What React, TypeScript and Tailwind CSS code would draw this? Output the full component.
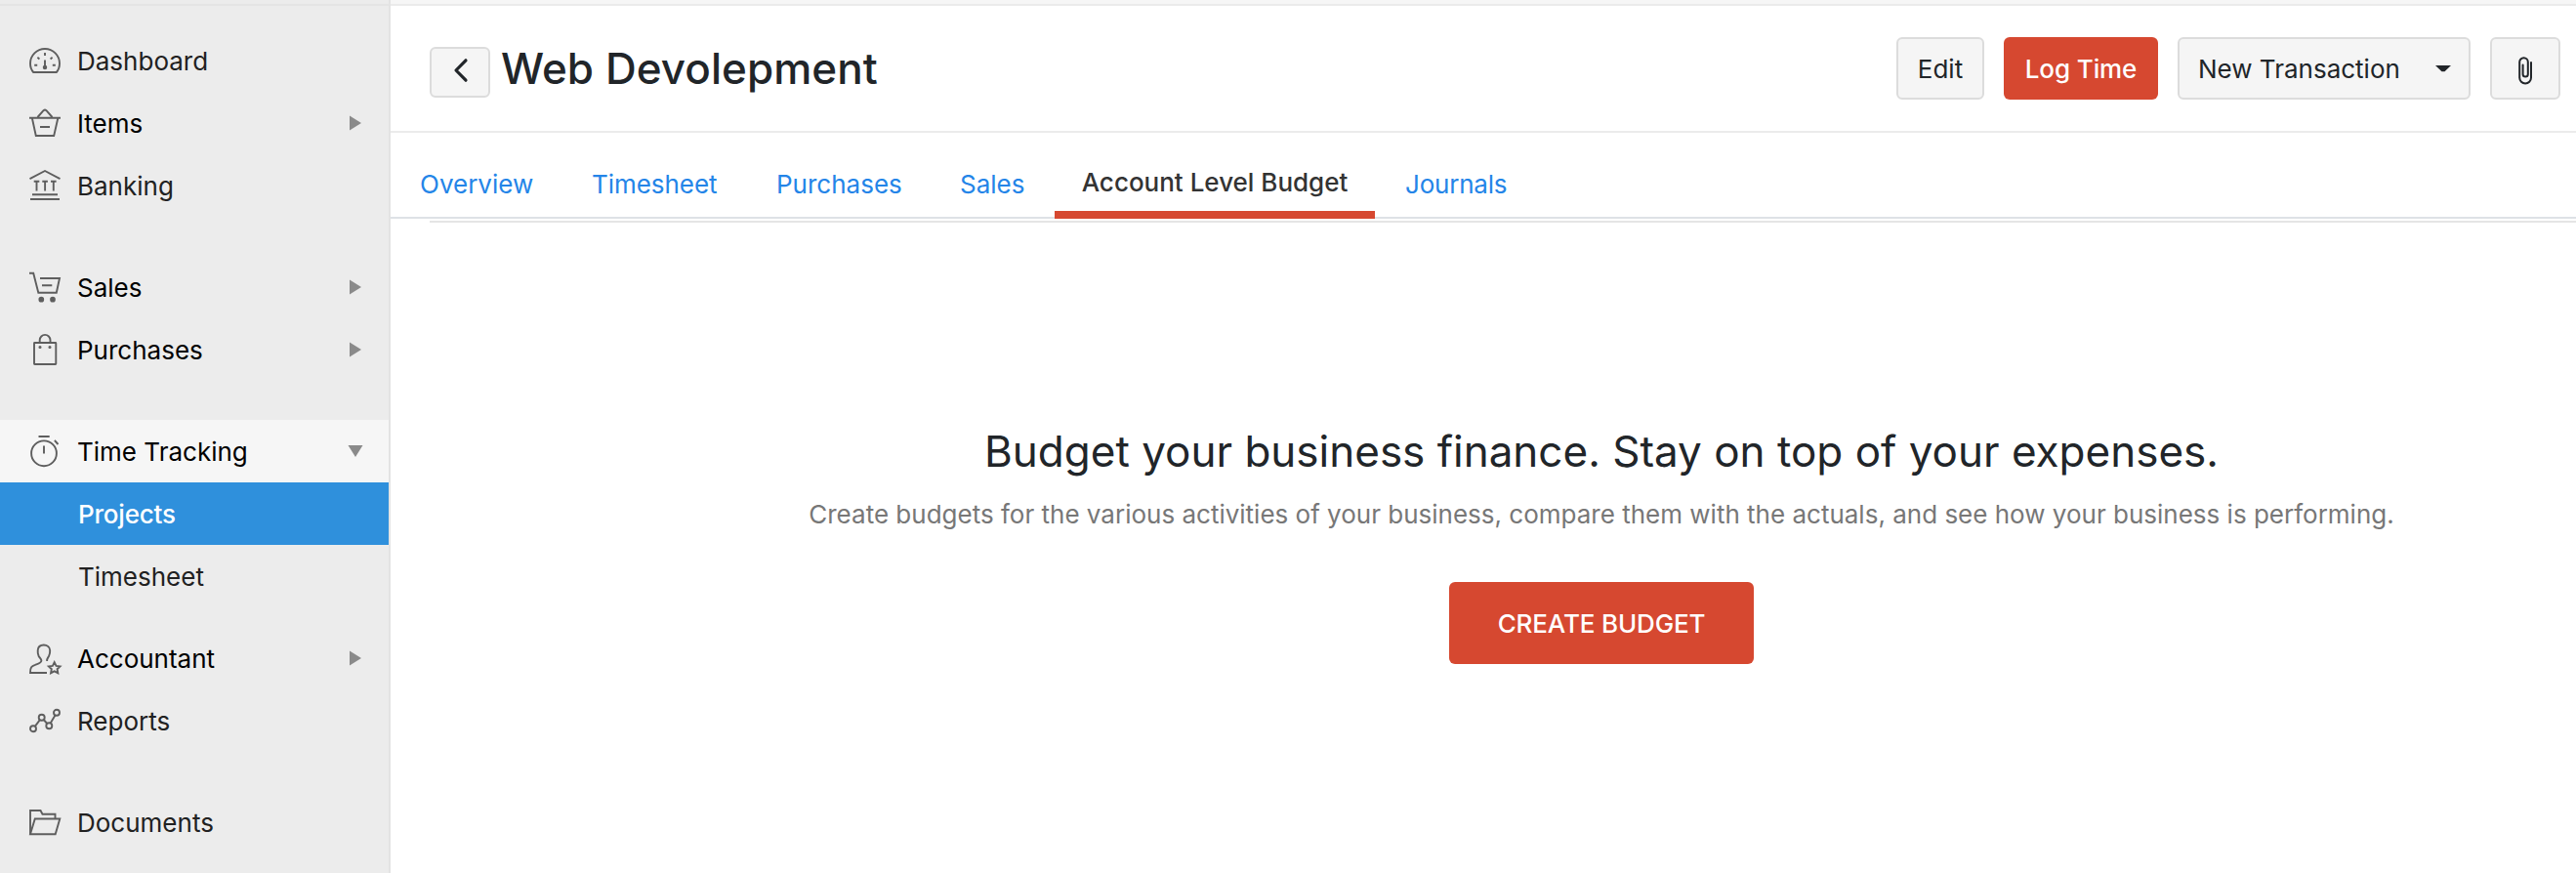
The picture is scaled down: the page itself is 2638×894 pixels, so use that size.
import type { ReactNode } from "react";

type NavItem = {
	label: string;
	icon?: ReactNode;
	arrow?: "right" | "down";
	active?: boolean;
};

const icons = {
	dashboard: (
		<>
			<path d="M4.200 28C2 25.500 1 22.500 1 19a15 15 0 0 1 30 0c0 3.500-1 6.500-3.200 9z" />
			<path d="M16 8v3M8.400 12.800l2 1.600M23.600 12.800l-2 1.600M5.200 20.800h3M23.800 20.800h3M16 15.500v6" />
			<circle cx="16" cy="23" r="1.300" fill="currentColor" />
		</>
	),
	items: (
		<>
			<path d="M8.500 10l6-6.800q1.500-1.200 3 0l6 6.800M0 10.800h32M3 11.500L6.800 29h18.400L29.200 11.500M11 20h10" />
		</>
	),
	banking: (
		<>
			<path d="M.5 9.200L16 1l15.500 8.200M4.700 11.800h5.600M13.300 11.800h5.600M22 11.800h5.600M7.500 12v9.500M16.100 12v9.500M24.800 12v9.500M3 25.300h26M1 30h30" />
		</>
	),
	sales: (
		<>
			<path d="M0 1.800h4.200L9.300 21.800h18.500L31 7H11M13 14.300h10.300" />
			<circle cx="12.300" cy="28.700" r="1.900" fill="currentColor" />
			<circle cx="24" cy="28.700" r="1.900" fill="currentColor" />
		</>
	),
	purchases: (
		<>
			<rect x="5" y="9" width="22.300" height="22" rx=".5" />
			<path d="M10.700 9V6.300a5.400 5.400 0 0 1 10.800 0V9" />
			<circle cx="11" cy="13.500" r=".6" fill="currentColor" />
			<circle cx="21" cy="13.500" r=".6" fill="currentColor" />
		</>
	),
	time: (
		<>
			<circle cx="15" cy="18.300" r="12.900" />
			<path d="M9.500 1h11.200M15 10.500v8M25.900 5l3.600 4" />
		</>
	),
	accountant: (
		<>
			<path d="M18 31H1c-.2-5.500 1.500-7 5-8.200 3.500-1.300 6.400-2 6.400-4.300 0-1.600-1.600-2.500-2.700-4.500C8.800 12 8.500 10 8.700 8c.3-3.600 2.700-5.500 6.100-5.500S21 4.500 21.200 8c.1 2-.2 4-1.200 6-1 1.700-2.200 2.500-1.900 5" />
			<path d="M25.700 20.200l1.800 3.700 4 .5-2.900 2.800.7 4-3.600-1.900-3.600 1.900.7-4-2.900-2.800 4-.5z" />
		</>
	),
	reports: (
		<>
			<circle cx="4" cy="24.300" r="3" />
			<circle cx="12.700" cy="12.700" r="3" />
			<circle cx="20.300" cy="21.300" r="3" />
			<circle cx="28" cy="7.700" r="3" />
			<path d="M5.800 21.900l5.100-6.800M14.700 15l3.600 4M21.700 18.600l4.900-8.300" />
		</>
	),
	documents: (
		<>
			<path d="M1 28.500V4h10.500l2 3.800h13V12" />
			<path d="M1 28.300L5.800 12.500h25.500l-4.600 15.800z" />
		</>
	),
};

const groups: { gap: string; items: NavItem[] }[] = [
	{
		gap: "mb-10",
		items: [
			{ label: "Dashboard", icon: icons.dashboard },
			{ label: "Items", icon: icons.items, arrow: "right" },
			{ label: "Banking", icon: icons.banking },
		],
	},
	{
		gap: "mb-10",
		items: [
			{ label: "Sales", icon: icons.sales, arrow: "right" },
			{ label: "Purchases", icon: icons.purchases, arrow: "right" },
		],
	},
	{
		gap: "mb-5",
		items: [
			{ label: "Time Tracking", icon: icons.time, arrow: "down" },
			{ label: "Projects", active: true },
			{ label: "Timesheet" },
		],
	},
	{
		gap: "mb-10",
		items: [
			{ label: "Accountant", icon: icons.accountant, arrow: "right" },
			{ label: "Reports", icon: icons.reports },
		],
	},
	{ gap: "", items: [{ label: "Documents", icon: icons.documents }] },
];

function NavRow({ label, icon, arrow, active }: NavItem) {
	let tone = "text-[#212121]";
	if (arrow) tone = "text-black";
	if (arrow === "down") tone = "text-black bg-[#f6f6f6]";
	if (active) tone = "text-white bg-[#2f90dc] font-medium tracking-[-0.2px]";

	return (
		<a href="#" className={`flex items-center h-16 pl-[30px] pr-[26px] ${tone}`}>
			<span className={`w-8 h-8 shrink-0 text-[#5e5e5e] ${icon ? "mr-[17px]" : "mr-[18px]"}`}>
				{icon && (
					<svg viewBox="0 0 32 32" className="w-8 h-8 overflow-visible" fill="none" stroke="currentColor" strokeWidth="1.900">
						{icon}
					</svg>
				)}
			</span>
			<span className="flex-1 pt-0.5 whitespace-nowrap">{label}</span>
			{arrow && (
				<svg viewBox="0 0 16 16" className="w-4 h-4 fill-[#8a8a8a]">
					{arrow === "right" ? <path d="M2 .5v15L14 8z" /> : <path d="M.5 2h15L8 14z" />}
				</svg>
			)}
		</a>
	);
}

function Sidebar() {
	return (
		<aside className="w-[400px] shrink-0 bg-[#ececec] border-r-2 border-[#e3e3e3]">
			<div className="h-1.5 mb-6 border-b-2 border-[#e4e4e4]" />
			<nav>
				{groups.map((group, i) => (
					<div key={i} className={group.gap}>
						{group.items.map((item) => (
							<NavRow key={item.label} {...item} />
						))}
					</div>
				))}
			</nav>
		</aside>
	);
}

function Header() {
	const button = "flex items-center h-16 rounded-md border-2 border-[#dcdcdc] bg-[#f5f5f5] whitespace-nowrap";

	return (
		<header className="flex items-start h-[130px] pl-10 pr-4 pt-8 border-b-2 border-[#ebebeb]">
			<button className="flex items-center justify-center w-[62px] h-[52px] mt-2.5 rounded-md border-2 border-[#dcdcdc] bg-[#f5f5f5]">
				<svg viewBox="0 0 14 24" className="w-3.5 h-6 -mt-1 ml-0.5 overflow-visible" fill="none" stroke="#212529" strokeWidth="3.200" strokeLinecap="round" strokeLinejoin="round">
					<path d="M12 1.800L2 12l10 10.200" />
				</svg>
			</button>
			<h1 className="ml-[11px] mt-1 text-[44px] leading-[56px] font-medium tracking-[0.05px] whitespace-nowrap">Web Devolepment</h1>
			<div className="flex gap-5 ml-auto">
				<button className={`${button} w-[90px] justify-center`}>
					<span className="pt-0.5">Edit</span>
				</button>
				<button className="h-16 w-[158px] pt-0.5 rounded-md bg-[#d64830] text-white font-medium tracking-[-0.1px] whitespace-nowrap">Log Time</button>
				<button className={`${button} w-[300px] justify-between pl-[19px] pr-[18px]`}>
					<span className="pt-0.5">New Transaction</span>
					<svg viewBox="0 0 16 8" className="w-4 h-2 fill-[#212529]">
						<path d="M0 1h16L9.500 7.200h-3z" />
					</svg>
				</button>
				<button className={`${button} w-[72px] justify-center`}>
					<svg viewBox="0 0 14 28" className="w-3.5 h-7 mt-1 overflow-visible" fill="none" stroke="#212529" strokeWidth="2" strokeLinecap="round">
						<path d="M13 6v15.500a5.900 5.900 0 0 1-11.800 0V5.500a4.300 4.300 0 0 1 8.600 0V18a2.600 2.600 0 0 1-5.200 0V8.500" />
					</svg>
				</button>
			</div>
		</header>
	);
}

function Tabs() {
	return (
		<nav className="flex h-22 pl-[30px] gap-[5px] text-[#2485e8] whitespace-nowrap">
			<a href="#" className="w-[171px] pt-[33px]">Overview</a>
			<a href="#" className="w-[184px] pt-[33px] tracking-[-0.05px]">Timesheet</a>
			<a href="#" className="w-[183px] pt-[33px]">Purchases</a>
			<a href="#" className="w-[92px] pt-[33px]">Sales</a>
			<a href="#" className="relative w-[328px] h-22 pt-[31px] text-center text-[#333] font-medium border-b-8 border-[#d64830]">Account Level Budget</a>
			<a href="#" className="pt-[33px] pl-[26px] tracking-[-0.2px]">Journals</a>
		</nav>
	);
}

export default function App() {
	return (
		<div className="flex w-full h-[894px] overflow-hidden bg-white text-[26px] leading-10 text-[#212529] font-['Inter',sans-serif]">
			<Sidebar />
			<main className="flex-1 min-w-0">
				<div className="h-1.5 bg-[#f6f6f6] border-b-2 border-[#ebebeb]" />
				<Header />
				<Tabs />
				<div className="-mt-0.5 border-t-2 border-[#dee2e6]" />
				<div className="ml-10 mt-0.5 border-t-2 border-[#e5e5e5]" />
				<section className="flex flex-col items-center pl-[242px] pt-[204px] whitespace-nowrap">
					<h2 className="text-[44px] leading-[60px]">Budget your business finance. Stay on top of your expenses.</h2>
					<p className="mt-[15px] text-[#777]">Create budgets for the various activities of your business, compare them with the actuals, and see how your business is performing.</p>
					<button className="w-[312px] h-[84px] pt-px mt-[49px] rounded-md bg-[#d64830] text-white font-medium tracking-[-0.15px]">CREATE BUDGET</button>
				</section>
			</main>
		</div>
	);
}
